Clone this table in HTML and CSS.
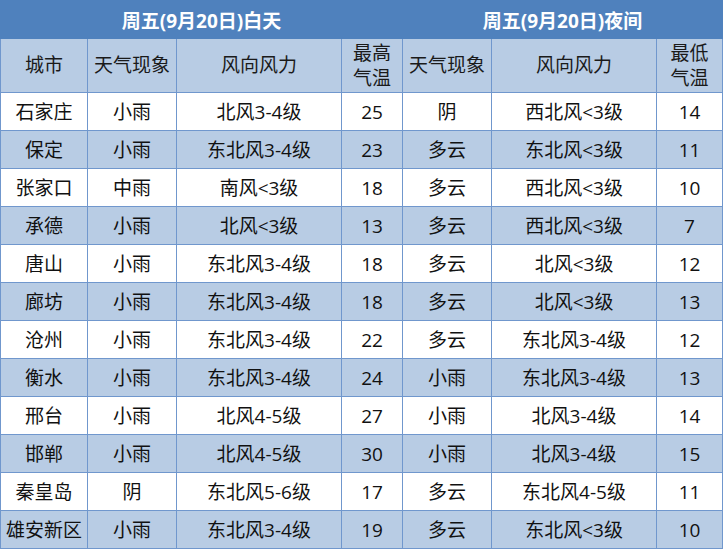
FILE: index.html
```html
<!DOCTYPE html>
<html lang="zh-CN">
<head>
<meta charset="utf-8">
<title>天气预报</title>
<link rel="stylesheet" href="styles.css">
</head>
<body>
<table class="wx">
  <colgroup>
    <col class="c-city">
    <col class="c-wx">
    <col class="c-wind">
    <col class="c-temp">
    <col class="c-wx">
    <col class="c-wind">
    <col class="c-temp2">
  </colgroup>
  <thead>
    <tr class="title">
      <th colspan="4">周五(9月20日)白天</th>
      <th colspan="3">周五(9月20日)夜间</th>
    </tr>
    <tr class="head">
      <th>城市</th>
      <th>天气现象</th>
      <th>风向风力</th>
      <th class="two">最高<br>气温</th>
      <th>天气现象</th>
      <th>风向风力</th>
      <th class="two">最低<br>气温</th>
    </tr>
  </thead>
  <tbody>
    <tr><td>石家庄</td><td>小雨</td><td>北风3-4级</td><td>25</td><td>阴</td><td>西北风&lt;3级</td><td>14</td></tr>
    <tr><td>保定</td><td>小雨</td><td>东北风3-4级</td><td>23</td><td>多云</td><td>东北风&lt;3级</td><td>11</td></tr>
    <tr><td>张家口</td><td>中雨</td><td>南风&lt;3级</td><td>18</td><td>多云</td><td>西北风&lt;3级</td><td>10</td></tr>
    <tr><td>承德</td><td>小雨</td><td>北风&lt;3级</td><td>13</td><td>多云</td><td>西北风&lt;3级</td><td>7</td></tr>
    <tr><td>唐山</td><td>小雨</td><td>东北风3-4级</td><td>18</td><td>多云</td><td>北风&lt;3级</td><td>12</td></tr>
    <tr><td>廊坊</td><td>小雨</td><td>东北风3-4级</td><td>18</td><td>多云</td><td>北风&lt;3级</td><td>13</td></tr>
    <tr><td>沧州</td><td>小雨</td><td>东北风3-4级</td><td>22</td><td>多云</td><td>东北风3-4级</td><td>12</td></tr>
    <tr><td>衡水</td><td>小雨</td><td>东北风3-4级</td><td>24</td><td>小雨</td><td>东北风3-4级</td><td>13</td></tr>
    <tr><td>邢台</td><td>小雨</td><td>北风4-5级</td><td>27</td><td>小雨</td><td>北风3-4级</td><td>14</td></tr>
    <tr><td>邯郸</td><td>小雨</td><td>北风4-5级</td><td>30</td><td>小雨</td><td>北风3-4级</td><td>15</td></tr>
    <tr><td>秦皇岛</td><td>阴</td><td>东北风5-6级</td><td>17</td><td>多云</td><td>东北风4-5级</td><td>11</td></tr>
    <tr><td>雄安新区</td><td>小雨</td><td>东北风3-4级</td><td>19</td><td>多云</td><td>东北风&lt;3级</td><td>10</td></tr>
  </tbody>
</table>
</body>
</html>
```
FILE: styles.css
```css
html, body {
  margin: 0;
  padding: 0;
  background: #ffffff;
}

.wx {
  border-collapse: collapse;
  table-layout: fixed;
  width: 722px;
  font-family: "Open Sans", "Noto Sans CJK SC", sans-serif;
  font-size: 19px;
  color: #111111;
}

.c-city { width: 87px; }
.c-wx { width: 89px; }
.c-wind { width: 165px; }
.c-temp { width: 61px; }
.c-temp2 { width: 66px; }

.wx th,
.wx td {
  border: 1px solid #7097cd;
  text-align: center;
  vertical-align: middle;
  padding: 0;
  white-space: nowrap;
  overflow: hidden;
}

.title th {
  background: #4f81bd;
  border-color: #4f81bd;
  color: #ffffff;
  font-weight: bold;
  height: 37px;
  font-size: 19px;
}

.head th {
  background: #b8cce4;
  font-weight: normal;
  color: #1a1a1a;
  height: 53px;
  line-height: 25px;
}

.wx td {
  height: 37px;
  line-height: 24px;
}

.wx tbody tr:nth-child(even) td {
  background: #b8cce4;
}

.wx tbody tr:nth-child(odd) td {
  background: #ffffff;
}
```
